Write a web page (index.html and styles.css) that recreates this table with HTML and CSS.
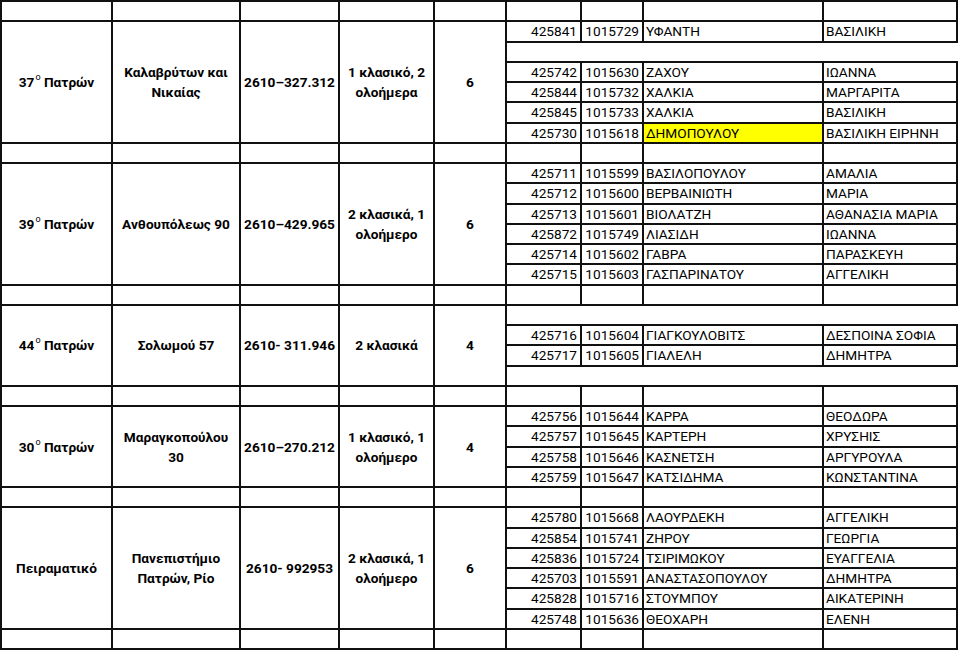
FILE: index.html
```html
<!DOCTYPE html>
<html lang="el">
<head>
<meta charset="utf-8">
<title>Σχολεία Πατρών</title>
<link rel="stylesheet" href="styles.css">
</head>
<body>
<div class="sheet">
  <!-- separator -->
  <div class="c"></div><div class="c"></div><div class="c"></div><div class="c"></div><div class="c"></div><div class="c"></div><div class="c"></div><div class="c"></div><div class="c"></div>

  <!-- 37 -->
  <div class="c hd r6">37<sup>ο</sup>&nbsp;Πατρών</div>
  <div class="c hd r6">Καλαβρύτων και<br>Νικαίας</div>
  <div class="c hd r6">2610–327.312</div>
  <div class="c hd r6">1 κλασικό, 2<br>ολοήμερα</div>
  <div class="c hd r6">6</div>
  <div class="c n">425841</div><div class="c n">1015729</div><div class="c t">ΥΦΑΝΤΗ</div><div class="c t">ΒΑΣΙΛΙΚΗ</div>
  <div class="c gap"></div>
  <div class="c n">425742</div><div class="c n">1015630</div><div class="c t">ΖΑΧΟΥ</div><div class="c t">ΙΩΑΝΝΑ</div>
  <div class="c n">425844</div><div class="c n">1015732</div><div class="c t">ΧΑΛΚΙΑ</div><div class="c t">ΜΑΡΓΑΡΙΤΑ</div>
  <div class="c n">425845</div><div class="c n">1015733</div><div class="c t">ΧΑΛΚΙΑ</div><div class="c t">ΒΑΣΙΛΙΚΗ</div>
  <div class="c n">425730</div><div class="c n">1015618</div><div class="c t mark">ΔΗΜΟΠΟΥΛΟΥ</div><div class="c t">ΒΑΣΙΛΙΚΗ ΕΙΡΗΝΗ</div>

  <!-- separator -->
  <div class="c"></div><div class="c"></div><div class="c"></div><div class="c"></div><div class="c"></div><div class="c"></div><div class="c"></div><div class="c"></div><div class="c"></div>

  <!-- 39 -->
  <div class="c hd r6">39<sup>ο</sup>&nbsp;Πατρών</div>
  <div class="c hd r6">Ανθουπόλεως 90</div>
  <div class="c hd r6">2610–429.965</div>
  <div class="c hd r6">2 κλασικά, 1<br>ολοήμερο</div>
  <div class="c hd r6">6</div>
  <div class="c n">425711</div><div class="c n">1015599</div><div class="c t">ΒΑΣΙΛΟΠΟΥΛΟΥ</div><div class="c t">ΑΜΑΛΙΑ</div>
  <div class="c n">425712</div><div class="c n">1015600</div><div class="c t">ΒΕΡΒΑΙΝΙΩΤΗ</div><div class="c t">ΜΑΡΙΑ</div>
  <div class="c n">425713</div><div class="c n">1015601</div><div class="c t">ΒΙΟΛΑΤΖΗ</div><div class="c t">ΑΘΑΝΑΣΙΑ ΜΑΡΙΑ</div>
  <div class="c n">425872</div><div class="c n">1015749</div><div class="c t">ΛΙΑΣΙΔΗ</div><div class="c t">ΙΩΑΝΝΑ</div>
  <div class="c n">425714</div><div class="c n">1015602</div><div class="c t">ΓΑΒΡΑ</div><div class="c t">ΠΑΡΑΣΚΕΥΗ</div>
  <div class="c n">425715</div><div class="c n">1015603</div><div class="c t">ΓΑΣΠΑΡΙΝΑΤΟΥ</div><div class="c t">ΑΓΓΕΛΙΚΗ</div>

  <!-- separator -->
  <div class="c"></div><div class="c"></div><div class="c"></div><div class="c"></div><div class="c"></div><div class="c"></div><div class="c"></div><div class="c"></div><div class="c"></div>

  <!-- 44 -->
  <div class="c hd r4">44<sup>ο</sup>&nbsp;Πατρών</div>
  <div class="c hd r4">Σολωμού 57</div>
  <div class="c hd r4">2610- 311.946</div>
  <div class="c hd r4">2 κλασικά</div>
  <div class="c hd r4">4</div>
  <div class="c gap"></div>
  <div class="c n">425716</div><div class="c n">1015604</div><div class="c t">ΓΙΑΓΚΟΥΛΟΒΙΤΣ</div><div class="c t">ΔΕΣΠΟΙΝΑ ΣΟΦΙΑ</div>
  <div class="c n">425717</div><div class="c n">1015605</div><div class="c t">ΓΙΑΛΕΛΗ</div><div class="c t">ΔΗΜΗΤΡΑ</div>
  <div class="c gap"></div>

  <!-- separator -->
  <div class="c"></div><div class="c"></div><div class="c"></div><div class="c"></div><div class="c"></div><div class="c"></div><div class="c"></div><div class="c"></div><div class="c"></div>

  <!-- 30 -->
  <div class="c hd r4">30<sup>ο</sup>&nbsp;Πατρών</div>
  <div class="c hd r4">Μαραγκοπούλου<br>30</div>
  <div class="c hd r4">2610–270.212</div>
  <div class="c hd r4">1 κλασικό, 1<br>ολοήμερο</div>
  <div class="c hd r4">4</div>
  <div class="c n">425756</div><div class="c n">1015644</div><div class="c t">ΚΑΡΡΑ</div><div class="c t">ΘΕΟΔΩΡΑ</div>
  <div class="c n">425757</div><div class="c n">1015645</div><div class="c t">ΚΑΡΤΕΡΗ</div><div class="c t">ΧΡΥΣΗΙΣ</div>
  <div class="c n">425758</div><div class="c n">1015646</div><div class="c t">ΚΑΣΝΕΤΣΗ</div><div class="c t">ΑΡΓΥΡΟΥΛΑ</div>
  <div class="c n">425759</div><div class="c n">1015647</div><div class="c t">ΚΑΤΣΙΔΗΜΑ</div><div class="c t">ΚΩΝΣΤΑΝΤΙΝΑ</div>

  <!-- separator -->
  <div class="c"></div><div class="c"></div><div class="c"></div><div class="c"></div><div class="c"></div><div class="c"></div><div class="c"></div><div class="c"></div><div class="c"></div>

  <!-- Πειραματικό -->
  <div class="c hd r6">Πειραματικό</div>
  <div class="c hd r6">Πανεπιστήμιο<br>Πατρών, Ρίο</div>
  <div class="c hd r6">2610- 992953</div>
  <div class="c hd r6">2 κλασικά, 1<br>ολοήμερο</div>
  <div class="c hd r6">6</div>
  <div class="c n">425780</div><div class="c n">1015668</div><div class="c t">ΛΑΟΥΡΔΕΚΗ</div><div class="c t">ΑΓΓΕΛΙΚΗ</div>
  <div class="c n">425854</div><div class="c n">1015741</div><div class="c t">ΖΗΡΟΥ</div><div class="c t">ΓΕΩΡΓΙΑ</div>
  <div class="c n">425836</div><div class="c n">1015724</div><div class="c t">ΤΣΙΡΙΜΩΚΟΥ</div><div class="c t">ΕΥΑΓΓΕΛΙΑ</div>
  <div class="c n">425703</div><div class="c n">1015591</div><div class="c t">ΑΝΑΣΤΑΣΟΠΟΥΛΟΥ</div><div class="c t">ΔΗΜΗΤΡΑ</div>
  <div class="c n">425828</div><div class="c n">1015716</div><div class="c t">ΣΤΟΥΜΠΟΥ</div><div class="c t">ΑΙΚΑΤΕΡΙΝΗ</div>
  <div class="c n">425748</div><div class="c n">1015636</div><div class="c t">ΘΕΟΧΑΡΗ</div><div class="c t">ΕΛΕΝΗ</div>

  <!-- separator -->
  <div class="c"></div><div class="c"></div><div class="c"></div><div class="c"></div><div class="c"></div><div class="c"></div><div class="c"></div><div class="c"></div><div class="c"></div>
</div>
</body>
</html>
```

FILE: styles.css
```css
html, body {
  margin: 0;
  padding: 0;
  background: #ffffff;
}

body {
  font-family: "Roboto", "Noto Sans", sans-serif;
  font-size: 13.65px;
  color: #000000;
}

.sheet {
  display: grid;
  grid-template-columns: 111px 128px 99px 95px 72px 75px 62px 180px 134px;
  grid-template-rows: repeat(32, 20.25px);
  width: max-content;
  border-top: 2px solid #111111;
  border-left: 2px solid #111111;
}

.c {
  box-sizing: border-box;
  border-right: 2px solid #111111;
  border-bottom: 2px solid #111111;
  display: flex;
  align-items: center;
  white-space: nowrap;
  overflow: hidden;
  line-height: 18px;
}

.hd {
  justify-content: center;
  text-align: center;
  font-weight: 700;
  line-height: 20px;
}

.hd sup {
  font-size: 9px;
  font-weight: 400;
  line-height: 0;
  vertical-align: 0;
  position: relative;
  top: -5px;
  margin-left: 1px;
}

.r6 {
  grid-row: span 6;
}

.r4 {
  grid-row: span 4;
}

.n {
  justify-content: flex-end;
  padding-right: 3px;
}

.t {
  padding-left: 2px;
}

.mark {
  background: #ffff00;
}

.gap {
  grid-column: span 4;
  border-right: none;
}
```
